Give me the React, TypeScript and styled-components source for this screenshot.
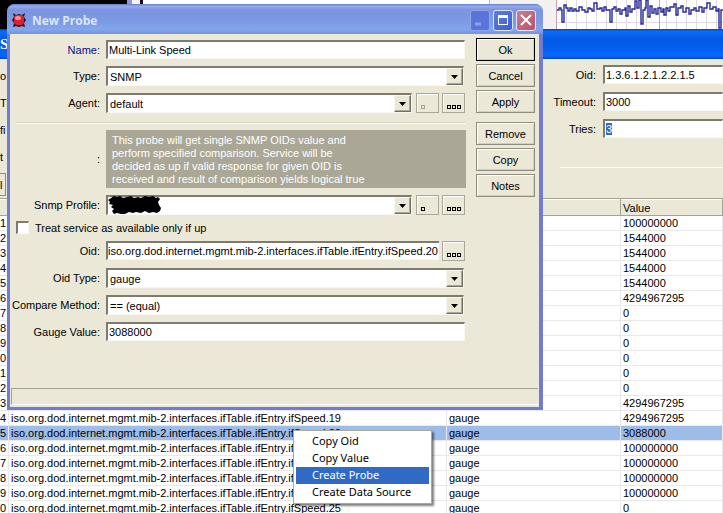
import React from "react";
import styled, { createGlobalStyle, css } from "styled-components";

const Global = createGlobalStyle`
  *, *::before, *::after { box-sizing: border-box; }
  html, body { margin: 0; height: 100%; overflow: hidden; }
  body, button, input, select, table {
    font-family: "Liberation Sans", Arial, sans-serif;
    font-size: 11px;
    line-height: 14px;
    color: #000;
  }
  #root { height: 100%; }
`;

const face = "#ebe8d8";
const edge = "#8f8d80";

const Desktop = styled.main`
  position: relative;
  height: 100%;
  overflow: hidden;
  background: #fff;
`;

/* windows behind */
const Backdrop = styled.div`
  display: flex;
  height: 29px;
  background: #f4f4f4;
`;
const Console = styled.div`
  width: 132px;
  background: #000;
  border-right: 5px solid #8d9ad6;
`;
const BackPane = styled.div`
  flex: 0 0 350px;
  background: #fff;
  border-right: 1px solid #b8b6aa;
  margin-left: 8px;
  border-left: 3px solid #1c0c14;
`;
const BackGap = styled.div`
  flex: 0 0 66px;
  padding-left: 10px;
  overflow: hidden;
  background: #f2f1ee;
`;
const Chart = styled.svg`
  flex: 1 0 167px;
  display: block;
  background: #fff;
`;

const BlueBar = styled.header`
  display: flex;
  align-items: center;
  height: 30px;
  background: linear-gradient(#0842b8, #0a6cf8 8%, #0458e4 35%, #0560f4 70%, #0668ff 90%, #0444c4);
  color: #fff;
  font: bold 15px/20px "Liberation Serif", serif;
`;

const QueryPanel = styled.section`
  display: grid;
  grid-template-columns: 560px 1fr;
  height: 139px;
  background: ${face};
`;
const Clipped = styled.div`
  display: flex;
  flex-direction: column;
  gap: 13px;
  padding-top: 10px;
`;
const ClippedButton = styled.button`
  width: 6px;
  height: 23px;
  margin-top: -4px;
  padding: 0;
  border: 1px solid ${edge};
  border-left: 0;
  background: ${face};
  text-align: left;
`;
const QueryFields = styled.div`
  display: flex;
  flex-direction: column;
  gap: 8px;
  padding-top: 6px;
  align-self: start;
  height: 109px;
  border-bottom: 1px solid #fff;
`;
const QueryRow = styled.div`
  display: grid;
  grid-template-columns: 36px 1fr;
  column-gap: 7px;
  align-items: center;
`;

const Grid = styled.table`
  width: 100%;
  table-layout: fixed;
  border-collapse: separate;
  border-spacing: 0;
  background: #fff;
  white-space: nowrap;
`;
const Head = styled.th`
  height: 18px;
  padding: 2px 0 0 2px;
  text-align: left;
  font-weight: normal;
  background: ${face};
  border-top: 1px solid #a5a396;
  border-bottom: 1px solid #a5a396;
  border-right: 1px solid #a5a396;
  box-shadow: inset 0 1px #fff;
`;
const Line = styled.tr<{ $picked?: boolean }>`
  ${(p) => p.$picked && css`background: #9dbde8;`}
`;
const Cell = styled.td<{ $index?: boolean }>`
  height: 15px;
  padding: 0 0 0 2px;
  line-height: 14px;
  overflow: hidden;
  border-right: 1px solid #e9e9e9;
  border-bottom: 1px solid #e9e9e9;
  ${(p) => p.$index && css`padding: 0;`}
`;

/* shared controls */
const sunken = css`
  border: 0;
  border-top: 2px solid #7d7b70;
  border-left: 2px solid #7d7b70;
  border-right: 1px solid #f8f7f1;
  border-bottom: 1px solid #f8f7f1;
  border-radius: 0;
  background: #fff;
  outline: 0;
`;
const Label = styled.label<{ $active?: boolean }>`
  text-align: right;
  white-space: nowrap;
  justify-self: end;
  color: ${(p) => (p.$active ? "#0a0a96" : "#000")};
`;
const TextBox = styled.input<{ $tight?: boolean }>`
  ${sunken}
  width: 100%;
  min-width: 0;
  height: 19px;
  padding: 0 1px;
  ${(p) => p.$tight && css`padding: 0; border-right: 0;`}
`;
const Selected = styled(TextBox)`
  &::selection { background: #316ac5; color: #fff; }
`;
const Combo = styled.span`
  display: grid;
  flex: 1;
  min-width: 0;
  margin-right: 1px;
`;
const Drop = styled.select`
  ${sunken}
  grid-area: 1 / 1;
  appearance: none;
  width: 100%;
  height: 20px;
  padding: 0 20px 0 2px;
`;
const Arrow = styled.span`
  grid-area: 1 / 1;
  justify-self: end;
  align-self: center;
  display: grid;
  place-items: center;
  width: 17px;
  height: 17px;
  margin: 1px 1px 0 0;
  background: ${face};
  border: 1px solid #f8f7f0;
  border-right-color: #716f64;
  border-bottom-color: #716f64;
  box-shadow: inset -1px -1px #aca899;
  pointer-events: none;
`;
const PushButton = styled.button<{ $default?: boolean; $spaced?: boolean }>`
  width: 100%;
  height: 23px;
  padding: 0;
  border: 1px solid ${(p) => (p.$default ? "#000" : edge)};
  box-shadow: inset 1px 1px #fff, inset -1px -1px #d2cfbf;
  background: ${face};
  margin-top: ${(p) => (p.$spaced ? "6px" : "0")};
`;
const Dots = styled.button`
  flex: 0 0 23px;
  height: 20px;
  padding: 0;
  display: grid;
  place-items: center;
  background: ${face};
  border: 1px solid #aaa79a;
  box-shadow: inset 1px 1px #fff;
`;

/* dialog */
const Dialog = styled.section`
  position: absolute;
  left: 7px;
  top: 4px;
  width: 536px;
  background: #6875cc;
  border: 3px solid #6f7ccf;
  border-top: 0;
  border-right-width: 4px;
  border-radius: 8px 8px 0 0;
`;
const TitleBar = styled.header`
  display: flex;
  align-items: center;
  gap: 3px;
  height: 30px;
  margin: 0 -4px 0 -3px;
  padding: 2px 7px 0 5px;
  border-radius: 8px 8px 0 0;
  background: linear-gradient(#6d7fd0, #92a9ec 8%, #7b94e0 20%, #7c9be4 60%, #83a6ea 85%, #7491de);
`;
const Title = styled.h1`
  flex: 1;
  margin: 0 0 0 3px;
  padding-top: 2px;
  color: #dbe5fb;
  font: bold 12px/18px "Open Sans", "Noto Sans", sans-serif;
`;
const Caption = styled.button<{ $tone: string; $dim?: boolean }>`
  width: 20px;
  height: 21px;
  padding: 0;
  display: grid;
  place-items: center;
  border: 1px solid ${(p) => (p.$dim ? "#8fa5ea" : "#dfe6fb")};
  border-radius: 3px;
  background: ${(p) => p.$tone};
`;
const Body = styled.div`
  display: flex;
  flex-direction: column;
  padding: 4px 1px 2px 1px;
  background: ${face};
`;
const Columns = styled.div`
  display: flex;
  gap: 10px;
  padding: 0 3px 0 5px;
`;
const Form = styled.form`
  flex: 1;
  min-width: 0;
  display: flex;
  flex-direction: column;
  gap: 7px;
  padding-top: 2px;
`;
const Row = styled.div`
  display: grid;
  grid-template-columns: 84px 1fr;
  column-gap: 6px;
  align-items: center;
`;
const Field = styled.div`
  display: flex;
  gap: 3px;
  min-width: 0;
  padding-right: 1px;
`;
const Rule = styled.hr`
  width: 100%;
  margin: 2px 0 -1px;
  border: 0;
  border-top: 1px solid #d6d3c3;
  border-bottom: 1px solid #fff;
`;
const Note = styled.p`
  margin: 0;
  padding: 4px 6px 2px;
  background: #aaa797;
  color: #fff;
  line-height: 13px;
`;
const CheckRow = styled.label`
  display: flex;
  align-items: center;
  gap: 6px;
  height: 13px;
  margin-top: -1px;
`;
const Check = styled.input`
  ${sunken}
  appearance: none;
  width: 13px;
  height: 13px;
  margin: 0;
`;
const Actions = styled.div`
  flex: 0 0 59px;
  display: flex;
  flex-direction: column;
  gap: 3px;
`;
const Status = styled.footer`
  height: 17px;
  margin-top: 47px;
  border-top: 1px solid #a5a294;
  border-left: 1px solid #a5a294;
  border-bottom: 1px solid #fff;
`;
const Scribble = styled.svg`
  grid-area: 1 / 1;
  align-self: center;
  margin-left: 2px;
  pointer-events: none;
`;

const Menu = styled.menu`
  position: absolute;
  left: 293px;
  top: 430px;
  width: 139px;
  margin: 0;
  padding: 2px;
  list-style: none;
  background: #fff;
  border: 1px solid #aca899;
  box-shadow: 2px 2px 2px rgba(0, 0, 0, 0.5);
`;
const MenuItem = styled.button<{ $on?: boolean }>`
  display: block;
  width: 100%;
  height: 17px;
  padding: 0 0 2px 16px;
  border: 0;
  text-align: left;
  white-space: nowrap;
  font: 11px/15px "Noto Sans", "Open Sans", sans-serif;
  background: ${(p) => (p.$on ? "#316ac5" : "#fff")};
  color: ${(p) => (p.$on ? "#fff" : "#000")};
`;

const values = [
  "100000000", "1544000", "1544000", "1544000", "1544000", "4294967295",
  "0", "0", "0", "0", "0", "0", "4294967295", "4294967295", "3088000",
  "100000000", "100000000", "100000000", "100000000", "0",
];
const oidPrefix = "iso.org.dod.internet.mgmt.mib-2.interfaces.ifTable.ifEntry.ifSpeed.";

function DotsIcon({ count, dim }: { count: number; dim?: boolean }) {
  return (
    <svg width="21" height="18" shapeRendering="crispEdges" fill="none" stroke={dim ? "#a5a294" : "#000"}>
      {Array.from({ length: count }, (_, i) => (
        <rect key={i} x={i * 5 + 4.5} y="11.5" width="3" height="3" />
      ))}
    </svg>
  );
}

function Select({ id, value, hidden }: { id: string; value: string; hidden?: boolean }) {
  return (
    <Combo>
      <Drop id={id} defaultValue={value}>
        <option value={value}>{value}</option>
      </Drop>
      {hidden && (
        <Scribble width="54" height="20">
          <path
            d="M3 3L6 1L9 2L12 1L15 3L19 2L23 1L26 3L30 2L33 3L37 1L41 2L45 1L48 3L50 2L52 4L50 7L51 10L53 13L52 16L49 18L45 17L41 18L37 16L33 18L28 17L25 18L21 17L17 19L13 19L9 18L6 19L4 16L6 14L3 12L5 10L1 9L2 7L0 5Z"
            fill="#000"
          />
        </Scribble>
      )}
      <Arrow>
        <svg width="7" height="4"><path d="M0 0H7L3.5 4Z" /></svg>
      </Arrow>
    </Combo>
  );
}

export default function App() {
  return (
    <>
      <Global />
      <Desktop>
        <Backdrop>
          <Console />
          <BackPane />
          <BackGap>
            <svg width="8" height="4" shapeRendering="crispEdges"><path d="M1 .5H6M1 2.5H6M5.5 1V4" stroke="#222" /></svg>
          </BackGap>
          <Chart viewBox="0 0 167 29" preserveAspectRatio="xMinYMin slice">
            <path d="M10.5 0V29M20.5 0V29M30.5 0V29M40.5 0V29M50.5 0V29M60.5 0V29M70.5 0V29M80.5 0V29M90.5 0V29M110.5 0V29M120.5 0V29M130.5 0V29M140.5 0V29M150.5 0V29M160.5 0V29M0 22.5H167" stroke="#dcdce2" />
            <path d="M.5 0V29M103.5 0V29" stroke="#c9a0ac" />
            <path
              d="M1 10H3V8H5V10H6V22H8V5H10V8H12V11H14V8H16V11H18V9H20V11H23V7H26V10H29V12H32V8H34V9H36V11H38V3H41V9H44V8H46V11H48V7H50V10H54V22H56V9H58V7H60V11H62V9H64V14H66V10H69V8H70V16H72V6H74V12H76V9H79V1H81V8H83V0H85V24H87V10H89V8H90V0H92V17H94V6H96V13H98V9H100V14H102V8H105V12H107V9H108V15H110V8H112V11H114V7H118V4H120V15H122V8H125V6H127V12H130V8H133V14H135V10H138V8H140V11H143V7H146V12H148V8H151V3H154V9H157V7H160V11H162V9H163V28H165V10H167"
              fill="none" stroke="#28289a" strokeWidth="1.4"
            />
          </Chart>
        </Backdrop>
        <BlueBar>S</BlueBar>
        <QueryPanel>
          <Clipped>
            <span>o</span>
            <span>T</span>
            <span>fi</span>
            <span>t</span>
            <ClippedButton type="button">l</ClippedButton>
          </Clipped>
          <QueryFields>
            <QueryRow>
              <Label htmlFor="q-oid">Oid:</Label>
              <TextBox id="q-oid" defaultValue="1.3.6.1.2.1.2.2.1.5" />
            </QueryRow>
            <QueryRow>
              <Label htmlFor="q-timeout">Timeout:</Label>
              <TextBox id="q-timeout" defaultValue="3000" />
            </QueryRow>
            <QueryRow>
              <Label htmlFor="q-tries">Tries:</Label>
              <Selected id="q-tries" defaultValue="3" autoFocus onFocus={(e) => e.currentTarget.select()} />
            </QueryRow>
          </QueryFields>
        </QueryPanel>
        <Grid>
          <colgroup>
            <col width="9" />
            <col width="438" />
            <col width="174" />
            <col />
          </colgroup>
          <thead>
            <tr>
              <Head />
              <Head />
              <Head />
              <Head>Value</Head>
            </tr>
          </thead>
          <tbody>
            {values.map((value, i) => (
              <Line key={i} $picked={i === 14}>
                <Cell $index>{(i + 1) % 10}</Cell>
                <Cell>{oidPrefix + (i + 6)}</Cell>
                <Cell>gauge</Cell>
                <Cell>{value}</Cell>
              </Line>
            ))}
          </tbody>
        </Grid>

        <Dialog aria-labelledby="dialog-title">
          <TitleBar>
            <svg width="14" height="15" viewBox="0 0 14 15">
              <path d="M1 0L4 2L7 1L10 2L13 0L12 4L14 7L12 10L13 14L10 13L7 14L4 13L1 14L2 10L0 7L2 4Z" fill="#241018" />
              <rect x="2" y="2" width="10" height="10" rx="3" fill="#dc2032" />
              <ellipse cx="6" cy="5" rx="3" ry="2" fill="#ff8c90" />
            </svg>
            <Title id="dialog-title">New Probe</Title>
            <Caption type="button" aria-label="Minimize" $tone="#5a74d8" $dim>
              <svg width="14" height="14"><path d="M2 11H8" stroke="#8ba2ee" strokeWidth="3" /></svg>
            </Caption>
            <Caption type="button" aria-label="Maximize" $tone="linear-gradient(135deg,#5d7be0,#3c5fd4)">
              <svg width="12" height="12" shapeRendering="crispEdges"><path d="M1.5 1.5H10.5V10.5H1.5Z" fill="none" stroke="#fff" /><path d="M1 2.5H11" stroke="#fff" strokeWidth="3" /></svg>
            </Caption>
            <Caption type="button" aria-label="Close" $tone="linear-gradient(135deg,#c88095,#b85068)">
              <svg width="12" height="12"><path d="M1 1L11 11M11 1L1 11" stroke="#fff" strokeWidth="2" /></svg>
            </Caption>
          </TitleBar>
          <Body>
            <Columns>
              <Form onSubmit={(e) => e.preventDefault()}>
                <Row>
                  <Label $active htmlFor="name">Name:</Label>
                  <Field><TextBox id="name" defaultValue="Multi-Link Speed" /></Field>
                </Row>
                <Row>
                  <Label htmlFor="type">Type:</Label>
                  <Field><Select id="type" value="SNMP" /></Field>
                </Row>
                <Row>
                  <Label htmlFor="agent">Agent:</Label>
                  <Field>
                    <Select id="agent" value="default" />
                    <Dots type="button" disabled aria-label="Edit agent"><DotsIcon count={1} dim /></Dots>
                    <Dots type="button" aria-label="Browse agents"><DotsIcon count={3} /></Dots>
                  </Field>
                </Row>
                <Rule />
                <Row>
                  <Label as="span">:</Label>
                  <Note>
                    This probe will get single SNMP OIDs value and<br />
                    perform specified comparison. Service will be<br />
                    decided as up if valid response for given OID is<br />
                    received and result of comparison yields logical true
                  </Note>
                </Row>
                <Row>
                  <Label htmlFor="profile">Snmp Profile:</Label>
                  <Field>
                    <Select id="profile" value="" hidden />
                    <Dots type="button" aria-label="Edit profile"><DotsIcon count={1} /></Dots>
                    <Dots type="button" aria-label="Browse profiles"><DotsIcon count={3} /></Dots>
                  </Field>
                </Row>
                <CheckRow>
                  <Check type="checkbox" />
                  Treat service as available only if up
                </CheckRow>
                <Row>
                  <Label htmlFor="oid">Oid:</Label>
                  <Field>
                    <TextBox id="oid" $tight defaultValue={oidPrefix + "20"} />
                    <Dots type="button" aria-label="Browse oids"><DotsIcon count={3} /></Dots>
                  </Field>
                </Row>
                <Row>
                  <Label htmlFor="oid-type">Oid Type:</Label>
                  <Field><Select id="oid-type" value="gauge" /></Field>
                </Row>
                <Row>
                  <Label htmlFor="compare">Compare Method:</Label>
                  <Field><Select id="compare" value="== (equal)" /></Field>
                </Row>
                <Row>
                  <Label htmlFor="gauge">Gauge Value:</Label>
                  <Field><TextBox id="gauge" defaultValue="3088000" /></Field>
                </Row>
              </Form>
              <Actions>
                <PushButton type="button" $default>Ok</PushButton>
                <PushButton type="button">Cancel</PushButton>
                <PushButton type="button">Apply</PushButton>
                <PushButton type="button" $spaced>Remove</PushButton>
                <PushButton type="button">Copy</PushButton>
                <PushButton type="button">Notes</PushButton>
              </Actions>
            </Columns>
            <Status />
          </Body>
        </Dialog>

        <Menu>
          <li><MenuItem type="button">Copy Oid</MenuItem></li>
          <li><MenuItem type="button">Copy Value</MenuItem></li>
          <li><MenuItem type="button" $on>Create Probe</MenuItem></li>
          <li><MenuItem type="button">Create Data Source</MenuItem></li>
        </Menu>
      </Desktop>
    </>
  );
}
